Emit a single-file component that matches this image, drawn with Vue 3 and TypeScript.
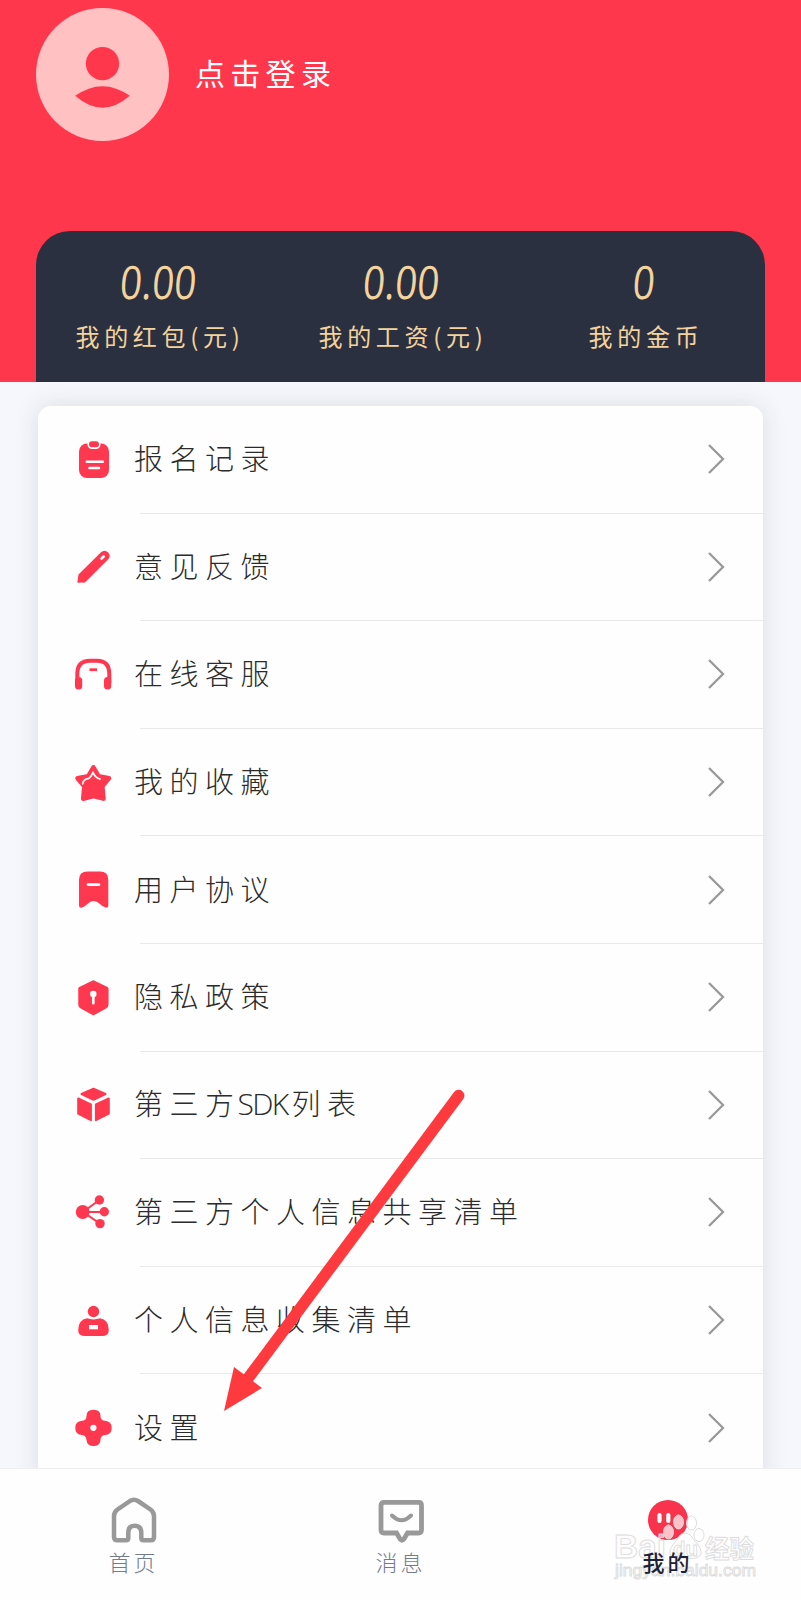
<script setup lang="ts">
interface Stat {
  value: string
  label: string
}
interface MenuItem {
  icon: string
  parts: { text: string; latin?: boolean }[]
}

const stats: Stat[] = [
  { value: '0.00', label: '我的红包(元)' },
  { value: '0.00', label: '我的工资(元)' },
  { value: '0', label: '我的金币' },
]

const menu: MenuItem[] = [
  { icon: 'record', parts: [{ text: '报名记录' }] },
  { icon: 'pencil', parts: [{ text: '意见反馈' }] },
  { icon: 'headset', parts: [{ text: '在线客服' }] },
  { icon: 'star', parts: [{ text: '我的收藏' }] },
  { icon: 'bookmark', parts: [{ text: '用户协议' }] },
  { icon: 'shield', parts: [{ text: '隐私政策' }] },
  { icon: 'cube', parts: [{ text: '第三方' }, { text: 'SDK', latin: true }, { text: '列表' }] },
  { icon: 'share', parts: [{ text: '第三方个人信息共享清单' }] },
  { icon: 'person', parts: [{ text: '个人信息收集清单' }] },
  { icon: 'settings', parts: [{ text: '设置' }] },
]
</script>

<template>
  <div class="page">
    <header class="header">
      <div class="profile">
        <svg class="avatar" viewBox="0 0 134 134">
          <circle cx="67" cy="67" r="67" fill="#ffc1c1" />
          <circle cx="67" cy="56" r="16.800" fill="#ff374d" />
          <path d="M39.500 88.500Q67 69 94.500 88.500Q67 112.500 39.500 88.500Z" fill="#ff374d" />
        </svg>
        <span class="login">点击登录</span>
      </div>
      <div class="stats">
        <div v-for="s in stats" :key="s.label" class="stat">
          <span class="value">{{ s.value }}</span>
          <span class="label">{{ s.label }}</span>
        </div>
      </div>
    </header>

    <main class="content">
      <ul class="card">
        <li v-for="m in menu" :key="m.icon" class="row">
          <svg class="icon" viewBox="0 0 40 40">
            <template v-if="m.icon === 'record'">
              <rect x="6" y="3.500" width="30" height="34.500" rx="8" />
              <rect x="14.500" y="-1" width="13" height="10" rx="4.500" fill="#fff" />
              <rect x="16" y="1.200" width="10" height="6" rx="3" />
              <path class="cut" d="M13.800 21.700h16M16.500 28h9.500" />
            </template>
            <template v-else-if="m.icon === 'pencil'">
              <path d="M4.300 35.700L5.500 27.600L28 5.300Q31.500 2.300 35 5.300Q38.300 9 35 12.500L13 34.500Q11.500 36 9 35.600Z" />
              <path class="cut" d="M28.500 11.700l2.200-2.200" stroke-width="3" />
            </template>
            <template v-else-if="m.icon === 'headset'">
              <path d="M4.300 28V19Q4.300 5.800 17 5.800H24Q36.300 5.800 36.300 19V28" fill="none" stroke="#ff3850" stroke-width="4" />
              <rect x="2" y="22" width="7.200" height="12.500" rx="3.500" />
              <rect x="31" y="22" width="7.200" height="12.500" rx="3.500" />
              <path d="M16.500 14.700h7.500" stroke="#ff3850" stroke-width="2.800" />
            </template>
            <template v-else-if="m.icon === 'star'">
              <path
                d="M20.400 4.300L25.500 13.200L36 15.200L29.300 23.200L30.500 35.700L20.400 33L10.200 35.700L11.300 23.200L4.500 15.200L15.300 13.200Z"
                stroke="#ff3850" stroke-width="4.500" stroke-linejoin="round"
              />
              <path class="cut-thin" d="M9.700 20.800Q10 16.200 16 15.300Q18 14 20 9.700Q22.500 15 27 16" />
            </template>
            <template v-else-if="m.icon === 'bookmark'">
              <path d="M6 10Q6 1.600 14.500 1.600H27Q35.300 1.600 35.300 10V36Q35.300 38 32.500 37.500Q29 36.500 27 34Q20.600 28 14.300 34Q12 37 8.500 37.700Q6 38 6 35.500Z" />
              <path class="cut" d="M15 14.600h11" />
            </template>
            <template v-else-if="m.icon === 'shield'">
              <path
                d="M20.400 4L33.800 10.500V26.500Q33.800 28.300 32.300 29L20.400 35.500L8.500 29Q7 28.300 7 26.500V10.500Z"
                stroke="#ff3850" stroke-width="3.500" stroke-linejoin="round"
              />
              <circle cx="20.300" cy="16" r="3.200" fill="#fff" />
              <path class="cut" d="M20.300 17v8.300" />
            </template>
            <template v-else-if="m.icon === 'cube'">
              <path
                d="M20.500 3.700L32.500 9L20.500 14.800L8.500 9ZM5.200 13.500L17.900 19.500V35.200L5.200 28.700ZM35.800 13.500L22.900 19.500V35.200L35.800 28.700Z"
                stroke="#ff3850" stroke-width="2" stroke-linejoin="round"
              />
            </template>
            <template v-else-if="m.icon === 'share'">
              <path d="M26.400 7L10 19L27 30.600M10 19H31" fill="none" stroke="#ff3850" stroke-width="2" />
              <circle cx="9.700" cy="19" r="6.900" />
              <circle cx="26.400" cy="7" r="4.700" />
              <circle cx="31.300" cy="18.800" r="4.700" />
              <circle cx="27" cy="30.600" r="4.700" />
            </template>
            <template v-else-if="m.icon === 'person'">
              <circle cx="20.500" cy="10.500" r="5.700" />
              <path d="M14 17.300Q20.500 19.500 27 17.300Q35.800 19 35.800 29Q35.800 35 29 35H12Q5.200 35 5.200 29Q5.200 19 14 17.300Z" />
              <rect x="16" y="24" width="9" height="4.300" fill="#fff" />
            </template>
            <template v-else>
              <path d="M20.500 1.800Q27.500 1.800 27.500 8Q27.500 12.500 32 12.800Q38.700 13.300 38.700 19.900Q38.700 26.500 32 27Q27.500 27.500 27.500 32Q27 38 20.500 38Q14 38 13.500 32Q13 27.500 9 27Q2.300 26.500 2.300 19.900Q2.300 13.300 9 12.800Q13.500 12.500 13.500 8Q13.500 1.800 20.500 1.800Z" />
              <circle cx="20.400" cy="19.800" r="3.100" fill="#fff" />
            </template>
          </svg>
          <div class="line">
            <span class="title"><span v-for="p in m.parts" :key="p.text" :class="{ latin: p.latin }">{{ p.text }}</span></span>
            <svg class="chevron" viewBox="0 0 18 32">
              <path d="M2 2L16 16L2 30" fill="none" stroke="#999" stroke-width="2.300" />
            </svg>
          </div>
        </li>
      </ul>
    </main>

    <nav class="tabs">
      <div class="tab">
        <svg class="tab-icon" viewBox="0 0 50 50">
          <path
            d="M21 6Q25 3.400 29 6L41.500 14.500Q45 17 45 21V42Q45 45.300 41.700 45.300H34.500Q32.300 45.300 32.300 43V38Q32.300 30.700 25.500 30.700Q19.300 30.700 19.300 38V43Q19.300 45.300 17 45.300H8.300Q5 45.300 5 42V21Q5 17 8.500 14.500Z"
            fill="none" stroke="#999" stroke-width="4.500"
          />
        </svg>
        <span>首页</span>
      </div>
      <div class="tab">
        <svg class="tab-icon" viewBox="0 0 50 50">
          <path
            d="M8 7.400H42.500Q45.500 7.400 45.500 10.400V35Q45.500 38 42.500 38H31.500L28 44Q26 46.500 24 44L20.500 38H8Q5 38 5 35V10.400Q5 7.400 8 7.400Z"
            fill="none" stroke="#999" stroke-width="4.800"
          />
          <path d="M16 20.500Q25.500 30 35 20.500" fill="none" stroke="#999" stroke-width="4" stroke-linecap="round" />
        </svg>
        <span>消息</span>
      </div>
      <div class="tab active">
        <svg class="tab-icon" viewBox="0 0 50 50">
          <circle cx="25" cy="25" r="20" fill="#f8334b" />
          <path d="M16.500 20v6M25.300 20v6" stroke="#fff" stroke-width="4.200" stroke-linecap="round" />
        </svg>
        <span>我的</span>
      </div>
    </nav>

    <svg class="watermark" viewBox="0 0 160 80">
      <g fill="#fff" fill-opacity=".7" stroke="#ddd" stroke-width="1">
        <ellipse cx="54.500" cy="18" rx="5" ry="7" />
        <ellipse cx="64.500" cy="8" rx="5" ry="7" />
        <ellipse cx="77.500" cy="9" rx="5" ry="7" />
        <ellipse cx="85" cy="21" rx="5" ry="6.500" />
        <path d="M71 19Q76 19 80 26Q88 34 87 40Q85 46 71 44Q57 46 56 40Q55 34 63 26Q66 19 71 19Z" />
      </g>
      <g class="wm">
        <text x="0" y="44" class="wm-big" textLength="52" lengthAdjust="spacingAndGlyphs">Bai</text>
        <text x="59" y="42" class="wm-du" textLength="25" lengthAdjust="spacingAndGlyphs">du</text>
        <text x="91" y="44" class="wm-cn" textLength="49" lengthAdjust="spacingAndGlyphs">经验</text>
        <text x="1" y="62" class="wm-url" textLength="141" lengthAdjust="spacingAndGlyphs">jingyan.baidu.com</text>
      </g>
    </svg>

    <svg class="pointer" viewBox="0 0 260 340">
      <path d="M248.700 15.500L36 301" stroke="#ff3a3e" stroke-width="11.500" stroke-linecap="round" />
      <path d="M14 331L24 287L52 308Z" fill="#ff3a3e" />
    </svg>
  </div>
</template>

<style>
body {
  margin: 0;
}
</style>

<style scoped>
.page {
  position: relative;
  width: 801px;
  height: 1600px;
  overflow: hidden;
  display: flex;
  flex-direction: column;
  background: #f5f7fc;
  font-family: "Noto Sans CJK SC", sans-serif;
  font-weight: 300;
}
.header {
  flex: none;
  height: 382px;
  box-sizing: border-box;
  padding: 8px 36px 0;
  display: flex;
  flex-direction: column;
  justify-content: space-between;
  background: #ff374d;
}
.profile {
  display: flex;
  align-items: center;
  gap: 26px;
}
.avatar {
  width: 133px;
  height: 133px;
}
.login {
  margin-bottom: 6px;
  color: #fff;
  font-size: 30px;
  line-height: 40px;
  letter-spacing: 5.300px;
  font-weight: 400;
}
.stats {
  height: 151px;
  display: grid;
  grid-template-columns: repeat(3, 1fr);
  background: #2b3040;
  border-radius: 34px 34px 0 0;
}
.stat {
  display: flex;
  flex-direction: column;
  align-items: center;
  color: #f4d39c;
}
.value {
  margin-top: 25px;
  height: 50px;
  line-height: 50px;
  font-family: "Open Sans", "Noto Sans", sans-serif;
  font-size: 46px;
  font-weight: 400;
  transform: translateX(1px) scaleX(0.84) skewX(-6deg);
}
.label {
  margin-top: 13px;
  font-size: 24px;
  line-height: 34px;
  letter-spacing: 4.700px;
  margin-right: -5px;
  font-weight: 400;
  white-space: nowrap;
}
.content {
  flex: none;
  height: 1086px;
  box-sizing: border-box;
  padding: 24px 38px 0;
  overflow: hidden;
}
.card {
  list-style: none;
  margin: 0;
  padding: 0;
  background: #fefefe;
  border-radius: 13px 13px 0 0;
  box-shadow: 0 0 24px rgba(50, 50, 55, 0.13);
}
.row {
  height: 107.600px;
  display: flex;
  align-items: center;
}
.icon {
  flex: none;
  width: 40px;
  height: 40px;
  margin-left: 35px;
  overflow: visible;
  fill: #ff3850;
}
.cut {
  stroke: #fff;
  stroke-width: 2.600px;
  stroke-linecap: round;
}
.cut-thin {
  fill: none;
  stroke: #fff;
  stroke-width: 1.700px;
  stroke-linecap: round;
}
.line {
  flex: 1;
  height: 100%;
  box-sizing: border-box;
  margin-left: 27px;
  padding-right: 38px;
  display: flex;
  align-items: center;
  justify-content: space-between;
  border-bottom: 1px solid #e9e9e9;
}
.title {
  margin-left: -6px;
  margin-bottom: 4px;
  color: #2b2b2b;
  font-size: 29px;
  line-height: 40px;
  letter-spacing: 6.500px;
  white-space: nowrap;
  display: flex;
  align-items: baseline;
}
.latin {
  font-family: "Open Sans", "Noto Sans", sans-serif;
  font-size: 30px;
  letter-spacing: -1.700px;
  margin-left: -3px;
  margin-right: 4px;
}
.chevron {
  width: 18px;
  height: 32px;
}
.tabs {
  flex: 1;
  box-sizing: border-box;
  border-top: 1px solid #eee;
  display: grid;
  grid-template-columns: repeat(3, 1fr);
  background: #fefefe;
}
.tab {
  padding-top: 26px;
  display: flex;
  flex-direction: column;
  align-items: center;
  color: #737b90;
  font-size: 22px;
  line-height: 32px;
  letter-spacing: 3px;
}
.tab-icon {
  width: 50px;
  height: 50px;
}
.active {
  color: #1d2238;
}
.active span {
  position: relative;
  z-index: 1;
  font-weight: 500;
}
.watermark {
  position: absolute;
  left: 614px;
  top: 1514px;
  width: 160px;
  height: 80px;
  overflow: visible;
}
.wm {
  fill: rgba(255, 255, 255, 0.6);
  stroke: #dcdcdc;
  stroke-width: 0.900px;
  font-family: "Liberation Sans", "Noto Sans CJK SC", sans-serif;
  font-weight: 700;
}
.wm-big {
  font-size: 33px;
}
.wm-du {
  font-size: 21px;
}
.wm-cn {
  font-size: 25px;
}
.wm-url {
  font-size: 17px;
  font-weight: 400;
}
.pointer {
  position: absolute;
  left: 210px;
  top: 1080px;
  width: 260px;
  height: 340px;
}
</style>
